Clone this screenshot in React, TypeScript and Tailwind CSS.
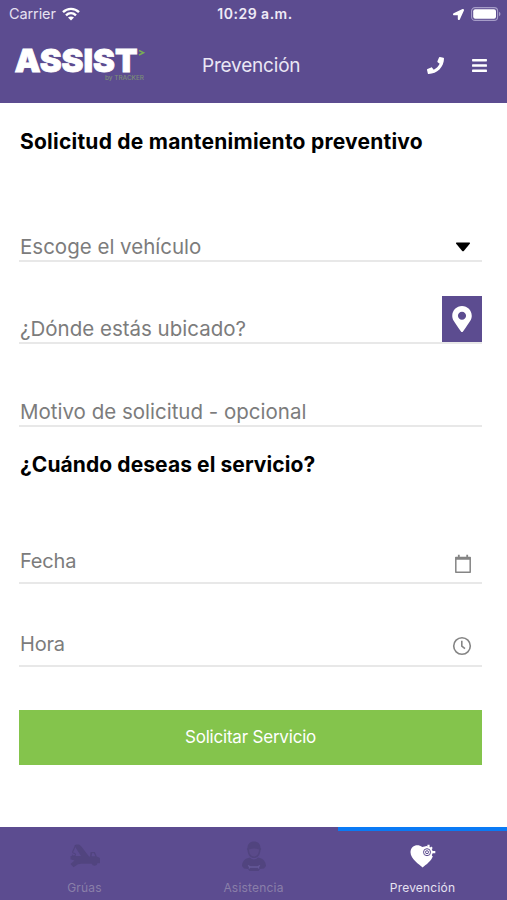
import type { ReactNode } from "react";
import { FaBars, FaLocationArrow, FaMapMarkerAlt, FaPhone } from "react-icons/fa";

function StatusBar() {
    return (
        <div className="flex h-7 items-center justify-between pl-[9px] pr-[6px] text-white">
            <div className="flex w-[120px] items-center gap-[6px]">
                <span className="text-[14.5px] leading-none tracking-[-0.1px] text-[#e6e1f1]">Carrier</span>
                <svg width="18" height="14" viewBox="0 0 18 14" fill="none" stroke="currentColor" strokeWidth="2.4">
                    <path d="M1 5.2C5.5.7 12.500.7 17 5.200" />
                    <path d="M4 8.300c2.900-2.700 7.100-2.700 10 0" />
                    <path d="M9 13.500 6 10.600c1.800-1.500 4.200-1.500 6 0z" fill="currentColor" stroke="none" />
                </svg>
            </div>
            <span className="text-[14px] font-semibold leading-none tracking-[0.5px] text-[#eeeaf6]">10:29 a.m.</span>
            <div className="flex w-[120px] items-center justify-end gap-[7px]">
                <FaLocationArrow size={11} />
                <svg width="30" height="14" viewBox="0 0 30 14">
                    <rect x="0.6" y="0.6" width="26" height="12.800" rx="3.500" fill="none" stroke="#a69dc8" strokeWidth="1.1" />
                    <rect x="2.200" y="2.200" width="22.800" height="9.600" rx="2" fill="#fff" />
                    <path d="M28 4.800c2 .8 2 3.600 0 4.400z" fill="#a69dc8" />
                </svg>
            </div>
        </div>
    );
}

function Logo() {
    return (
        <svg width="136" height="60" viewBox="0 -10 136 60" className="shrink-0">
            <text x="1.5" y="26" fill="#fff" stroke="#fff" strokeWidth="0.8" fontSize="32" fontWeight="900" textLength="123" lengthAdjust="spacingAndGlyphs">ASSIST</text>
            <path d="m126 4.500 4.500 2.200-4.500 2.300" fill="none" stroke="#79ad55" strokeWidth="1.500" />
            <text x="92" y="34" fill="#7b8d77" fontSize="6" fontWeight="500" textLength="39" lengthAdjust="spacingAndGlyphs">by TRACKER</text>
        </svg>
    );
}

function Field({ label, textClass, children }: { label: string; textClass: string; children?: ReactNode }) {
    return (
        <div className="flex h-[82.5px] items-end justify-between border-b-2 border-[#e8e8e8]">
            <span className={textClass}>{label}</span>
            {children}
        </div>
    );
}

function TowTruckIcon() {
    return (
        <svg width="30" height="24" viewBox="0 0 30 24" fill="currentColor">
            <path d="M4.500 1.500 6 .5h3l2 1.500 8 10.500h1l.6-4.500h4.200l2 4.500 2.700 1.300c1 .8 1 4.700 0 5.500h-2a3 3 0 0 1-5.800.5H11l-3 .5-4.500 3-3-3.300 4-3.500-4-1.200v-3.200h10.500L6.500 5z" />
            <path d="M5.300 2 2.800 7.500c-.8 2.500 2.800 1 2.700 3.200-.2 1.500-2.700 1.500-3.500 0" fill="none" stroke="currentColor" strokeWidth="1.100" />
            <path d="M22 9.200h2l1.300 3h-3.600z" fill="#5c4c90" />
        </svg>
    );
}

function MechanicIcon() {
    return (
        <svg width="26" height="30" viewBox="0 0 26 30">
            <path d="M6.500 7C6.500 3 9 .5 13 .5S19.500 3 19.500 7l.7 1-.7 1.200c-.3 5-3 7.800-6.500 7.800s-6.200-2.800-6.500-7.800L5.800 8z" fill="#51447f" />
            <path d="M8 8.500c3-1.200 7-1.200 10 0 0 4-2 7-5 7s-5-3-5-7z" fill="#5a4a8a" />
            <path d="M1 25c.2-5 3-7.500 8-8.500 2.200 2.500 5.800 2.500 8 0 5 1 7.800 3.500 8 8.500l-2 2.500-4 .5-1.500 2h-9L7 28l-4-.5z" fill="#51447f" />
            <path d="m7 24.500 2 1.300L8 27.500m1-1.500h8m2-1.500-2 1.300 1 1.700" fill="none" stroke="#66599a" strokeWidth="1.300" />
        </svg>
    );
}

function HeartGearIcon() {
    return (
        <svg width="28" height="24" viewBox="0 0 28 24">
            <path d="M13.600 23.500C10.500 20.800 1.500 14.800 1.500 8.300c0-7 7.500-9 11.700-5.300L18 2l5.500 11c-1.500 4.200-6 7.300-9.900 10.500z" fill="#fff" />
            <g transform="translate(18 8.200)">
                <path d="M1.500-7.500V0H8.300M0 0l5-5M0 0l5 5" stroke="#fff" strokeWidth="2.200" fill="none" />
                <circle r="5.700" fill="#fff" />
                <circle r="3.500" fill="none" stroke="#5c4c90" strokeWidth="1" />
                <circle r="1.500" fill="none" stroke="#5c4c90" strokeWidth="1" />
            </g>
        </svg>
    );
}

const tabs = [
    { label: "Grúas", icon: <TowTruckIcon />, active: false },
    { label: "Asistencia", icon: <MechanicIcon />, active: false },
    { label: "Prevención", icon: <HeartGearIcon />, active: true },
];

const selectText = "pl-px text-[20.5px] leading-[27px] text-[#7c7c7c]";
const dateText = "pb-[7px] pl-px text-[20px] leading-7 tracking-[-0.2px] text-[#7c7c7c]";

export default function App() {
    return (
        <div className="flex h-[900px] w-full flex-col bg-white font-['Inter','Liberation_Sans',sans-serif]">
            <header className="h-[103px] shrink-0 bg-[#5c4c90]">
                <StatusBar />
                <div className="flex h-[75px] items-center pl-[13px] pr-[19px] text-white">
                    <Logo />
                    <h1 className="ml-[53px] text-[19px] leading-7 tracking-[-0.2px] text-[#eae6f4]">Prevención</h1>
                    <FaPhone size={17} className="ml-auto" />
                    <FaBars size={17} className="ml-[27px]" />
                </div>
            </header>

            <main className="flex-1 pl-[19px] pr-[25px]">
                <h2 className="pl-px pt-[25px] text-[21px] font-bold leading-7 tracking-[0.23px] text-black">Solicitud de mantenimiento preventivo</h2>
                <div className="mt-[23px]">
                    <Field label="Escoge el vehículo" textClass={selectText}>
                        <svg width="16" height="10" viewBox="0 0 16 10" className="mr-[11px] mb-[8px]">
                            <path d="M1.500.5h13q1 .4.3 1.300L9 8.800q-1 1-2 0L1.200 1.800Q.5.900 1.500.5z" />
                        </svg>
                    </Field>
                    <Field label="¿Dónde estás ubicado?" textClass={selectText}>
                        <button className="flex h-[46px] w-10 items-center justify-center bg-[#5c4c90] text-white">
                            <FaMapMarkerAlt size={26} />
                        </button>
                    </Field>
                    <Field label="Motivo de solicitud - opcional" textClass={selectText} />
                </div>

                <h2 className="pl-px pt-6 text-[21px] font-bold leading-7 tracking-[0.08px] text-black">¿Cuándo deseas el servicio?</h2>
                <div className="mt-[23px]">
                    <Field label="Fecha" textClass={dateText}>
                        <svg width="18" height="20" viewBox="0 0 18 20" fill="none" stroke="#858585" className="mr-[10px] mb-[8px]">
                            <path d="M1.800 3.500h14.400v14.700H1.800z" strokeWidth="1.500" strokeLinejoin="round" />
                            <path d="M1.500 4.500h15" strokeWidth="2.500" />
                            <path d="M4.800.8v3M13.200.8v3" strokeWidth="1.800" />
                        </svg>
                    </Field>
                    <Field label="Hora" textClass={dateText}>
                        <svg width="20" height="20" viewBox="0 0 20 20" fill="none" stroke="#858585" strokeWidth="1.600" className="mr-[10px] mb-[9px]">
                            <circle cx="10" cy="10" r="8.300" />
                            <path d="M9.800 4.800v5.400l3.200 2.500" />
                        </svg>
                    </Field>
                </div>
                <button className="mt-[43px] h-[55px] w-full bg-[#84c44c] pt-[2px] text-[17px] tracking-[-0.2px] text-white">Solicitar Servicio</button>
            </main>

            <nav className="grid h-[73px] shrink-0 grid-cols-3 bg-[#5c4c90]">
                {tabs.map((tab) => (
                    <div
                        key={tab.label}
                        className={
                            tab.active
                                ? "flex flex-col items-center border-t-4 border-[#0a7af5] text-[#e6e1f1]"
                                : "flex flex-col items-center border-t-4 border-transparent text-[#8a7fa9]"
                        }
                    >
                        <div className="mt-[10px] flex h-[30px] items-center text-[#51447f]">{tab.icon}</div>
                        <span className="mt-[9px] text-[12px] leading-4 tracking-[0.2px]">{tab.label}</span>
                    </div>
                ))}
            </nav>
        </div>
    );
}
